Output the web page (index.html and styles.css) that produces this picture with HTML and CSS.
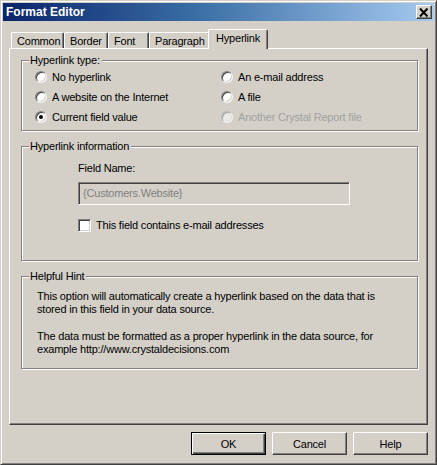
FILE: index.html
```html
<!DOCTYPE html>
<html>
<head>
<meta charset="utf-8">
<title>Format Editor</title>
<link rel="stylesheet" href="styles.css">
</head>
<body>
<div class="window">
  <div class="titlebar">
    <span class="title">Format Editor</span>
    <span class="close">
      <svg width="10" height="9" viewBox="0 0 10 9"><path d="M1 0.5 L8.5 8.5 M8.5 0.5 L1 8.5" stroke="#000" stroke-width="2" fill="none"/></svg>
    </span>
  </div>
  <div class="tabs">
    <div class="tab tab-common">Common</div>
    <div class="tab tab-border">Border</div>
    <div class="tab tab-font">Font</div>
    <div class="tab tab-para">Paragraph</div>
    <div class="tab tab-link selected">Hyperlink</div>
  </div>
  <div class="panel">
    <fieldset class="group group-type">
      <legend>Hyperlink type:</legend>
      <div class="radio-grid">
        <div class="opt"><span class="radio"></span>No hyperlink</div>
        <div class="opt"><span class="radio"></span>An e-mail address</div>
        <div class="opt"><span class="radio"></span>A website on the Internet</div>
        <div class="opt"><span class="radio"></span>A file</div>
        <div class="opt"><span class="radio checked"></span>Current field value</div>
        <div class="opt disabled"><span class="radio"></span>Another Crystal Report file</div>
      </div>
    </fieldset>
    <fieldset class="group group-info">
      <legend>Hyperlink information</legend>
      <div class="info">
        <div class="field-label">Field Name:</div>
        <div class="textbox">{Customers.Website}</div>
        <div class="check-row"><span class="checkbox"></span>This field contains e-mail addresses</div>
      </div>
    </fieldset>
    <fieldset class="group group-hint">
      <legend>Helpful Hint</legend>
      <div class="hint-body">
        <p>This option will automatically create a hyperlink based on the data that is stored in this field in your data source.</p>
        <p class="second">The data must be formatted as a proper hyperlink in the data source, for example http://www.crystaldecisions.com</p>
      </div>
    </fieldset>
  </div>
  <div class="buttons">
    <div class="btn default">OK</div>
    <div class="btn">Cancel</div>
    <div class="btn">Help</div>
  </div>
</div>
</body>
</html>
```
FILE: styles.css
```css
html, body {
  margin: 0;
  padding: 0;
  background: #ffffff;
}
body {
  font-family: "Liberation Sans", Arial, sans-serif;
  font-size: 11px;
  letter-spacing: -0.2px;
  color: #000;
}
.window {
  width: 437px;
  height: 465px;
  box-sizing: border-box;
  background: #D4D0C8;
  border: 1px solid;
  border-color: #D4D0C8 #404040 #404040 #D4D0C8;
  box-shadow: inset 1px 1px 0 #fff, inset -1px -1px 0 #808080;
  padding: 2px;
  display: flex;
  flex-direction: column;
}
.titlebar {
  height: 18px;
  flex: none;
  display: flex;
  align-items: center;
  justify-content: space-between;
  background: linear-gradient(to right, #0A246A 0%, #3A6EA5 45%, #A6CAF0 100%);
  padding: 0 2px 0 3px;
}
.title {
  color: #fff;
  font-weight: bold;
  font-size: 12px;
  letter-spacing: 0;
}
.close {
  width: 16px;
  height: 14px;
  box-sizing: border-box;
  background: #D4D0C8;
  border: 1px solid;
  border-color: #fff #404040 #404040 #fff;
  box-shadow: inset -1px -1px 0 #808080;
  display: flex;
  align-items: center;
  justify-content: center;
}
.close svg { display: block; }
.tabs {
  display: flex;
  align-items: flex-end;
  margin: 8px 0 0 8px;
  height: 19px;
  flex: none;
}
.tab {
  height: 16px;
  box-sizing: border-box;
  border-top: 1px solid #fff;
  border-left: 1px solid #fff;
  border-right: 1px solid #404040;
  box-shadow: inset -1px 0 0 #808080;
  border-radius: 2px 2px 0 0;
  padding: 2px 0 0 5px;
  line-height: 13px;
  white-space: nowrap;
}
.tab-common { width: 53px; }
.tab-border { width: 44px; }
.tab-font { width: 41px; }
.tab-para { width: 61px; }
.tab.selected {
  width: 60px;
  height: 20px;
  margin: 0 0 -1px -2px;
  padding: 2px 0 0 7px;
  position: relative;
  z-index: 1;
  background: #D4D0C8;
}
.panel {
  flex: 1;
  margin: 0 6px;
  box-sizing: border-box;
  border: 1px solid;
  border-color: #fff #404040 #404040 #fff;
  box-shadow: inset -1px -1px 0 #808080;
  padding: 5px 9px 0 11px;
}
.group {
  margin: 0;
  min-width: 0;
  border: 1px solid #808080;
  box-shadow: inset 1px 1px 0 #fff, 1px 1px 0 #fff;
  padding: 0;
}
.group legend {
  padding: 0 2px 0 1px;
  margin-left: 7px;
  line-height: 13px;
  background: #D4D0C8;
  position: relative;
}
.radio-grid {
  display: grid;
  grid-template-columns: 186px 1fr;
  grid-auto-rows: 20px;
  padding: 0 0 3px 13px;
}
.opt {
  display: flex;
  align-items: center;
  white-space: nowrap;
}
.opt.disabled {
  color: #A0A0A0;
}
.radio {
  width: 12px;
  height: 12px;
  box-sizing: border-box;
  border-radius: 50%;
  background: #fff;
  border: 1px solid;
  border-color: #808080 #f4f4f4 #f4f4f4 #808080;
  box-shadow: inset 1px 1px 0 #404040, inset -1px -1px 0 #D4D0C8;
  margin-right: 5px;
  display: flex;
  align-items: center;
  justify-content: center;
}
.radio.checked::after {
  content: "";
  width: 4px;
  height: 4px;
  border-radius: 50%;
  background: #000;
}
.opt.disabled .radio {
  background: #ECEAE6;
  border-color: #B8B8B8 #f4f4f4 #f4f4f4 #B8B8B8;
  box-shadow: inset 1px 1px 0 #A0A0A0, inset -1px -1px 0 #E0DED8;
}
.group-info {
  margin-top: 9px;
}
.info {
  padding: 9px 0 28px 56px;
}
.field-label {
  line-height: 13px;
}
.textbox {
  width: 272px;
  height: 23px;
  box-sizing: border-box;
  margin-top: 7px;
  border: 1px solid;
  border-color: #808080 #fff #fff #808080;
  box-shadow: inset 1px 1px 0 #404040, inset -1px -1px 0 #D4D0C8;
  background: #D4D0C8;
  color: #808080;
  padding: 4px 0 0 4px;
  line-height: 13px;
}
.check-row {
  margin-top: 14px;
  display: flex;
  align-items: center;
  line-height: 13px;
}
.checkbox {
  width: 13px;
  height: 13px;
  box-sizing: border-box;
  background: #fff;
  border: 1px solid;
  border-color: #808080 #fff #fff #808080;
  box-shadow: inset 1px 1px 0 #404040, inset -1px -1px 0 #D4D0C8;
  margin-right: 5px;
}
.group-hint {
  margin-top: 9px;
}
.hint-body {
  padding: 7px 30px 12px 15px;
}
.group-hint p {
  margin: 0;
  line-height: 13px;
}
.group-hint p.second {
  margin-top: 14px;
}
.buttons {
  flex: none;
  display: flex;
  justify-content: flex-end;
  gap: 6px;
  margin: 7px 6px 7px 0;
}
.btn {
  width: 75px;
  height: 23px;
  box-sizing: border-box;
  border: 1px solid;
  border-color: #fff #404040 #404040 #fff;
  box-shadow: inset -1px -1px 0 #808080;
  display: flex;
  align-items: center;
  justify-content: center;
}
.btn.default {
  border: 1px solid #000;
  box-shadow: inset 1px 1px 0 #fff, inset -1px -1px 0 #404040, inset -2px -2px 0 #808080;
}
```
